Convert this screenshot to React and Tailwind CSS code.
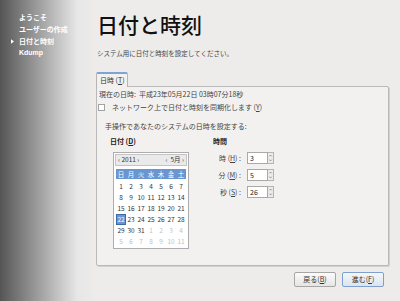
import React from "react";

const weekdays = ["日", "月", "火", "水", "木", "金", "土"];
const weeks = [
  [1, 2, 3, 4, 5, 6, 7],
  [8, 9, 10, 11, 12, 13, 14],
  [15, 16, 17, 18, 19, 20, 21],
  [22, 23, 24, 25, 26, 27, 28],
  [29, 30, 31, 1, 2, 3, 4],
  [5, 6, 7, 8, 9, 10, 11],
];

function Key({ k }) {
  return (
    <span>
      (<span className="underline">{k}</span>)
    </span>
  );
}

function Spin({ label, k, value }) {
  return (
    <div className="flex items-center h-[12px]">
      <div className="w-[28px] text-right whitespace-nowrap text-[#444]">
        {label} <Key k={k} /> :
      </div>
      <div className="ml-[6px] w-[21px] h-[12px] bg-white border border-[#a9a9a9] pl-[2px] leading-[10px] text-[#222]">
        {value}
      </div>
      <div className="w-[6px] h-[12px] flex flex-col border border-l-0 border-[#b4b4b4] bg-[#ecebea]">
        <svg viewBox="0 0 6 5" className="w-[5px] h-[5px]">
          <path d="M1.5 3.5 L3 2 L4.5 3.5" fill="none" stroke="#666" strokeWidth="0.8" />
        </svg>
        <svg viewBox="0 0 6 5" className="w-[5px] h-[5px]">
          <path d="M1.5 1.5 L3 3 L4.5 1.5" fill="none" stroke="#666" strokeWidth="0.8" />
        </svg>
      </div>
    </div>
  );
}

export default function App() {
  return (
    <div className="w-[400px] h-[301px] flex overflow-hidden bg-[#edeceb] font-['Noto_Sans_CJK_JP','Noto_Sans',sans-serif]">
      {/* sidebar */}
      <aside className="w-[94px] shrink-0 bg-[linear-gradient(to_right,#555555,#e7e7e7_82%,#ecebea)] pt-[11px] text-white text-[7px] font-bold leading-[12px]">
        <div className="flex items-center pl-[11px]">
          <span className="w-[8px]" />
          ようこそ
        </div>
        <div className="flex items-center pl-[11px]">
          <span className="w-[8px]" />
          ユーザーの作成
        </div>
        <div className="flex items-center pl-[11px]">
          <span className="w-[8px] flex items-center">
            <svg viewBox="0 0 4 6" className="w-[3px] h-[5px]">
              <path d="M0 0 L4 3 L0 6 Z" fill="#fff" />
            </svg>
          </span>
          日付と時刻
        </div>
        <div className="flex items-center pl-[11px] font-['Liberation_Sans',sans-serif]">
          <span className="w-[8px]" />
          Kdump
        </div>
      </aside>

      {/* main */}
      <main className="flex-1 pl-[2px] flex flex-col text-[7px] text-[#333]">
        <h1 className="mt-[12px] pl-[1px] h-[24px] leading-[24px] text-[21px] font-medium text-[#111]">
          日付と時刻
        </h1>
        <p className="mt-[12px] pl-[1px] h-[10px] leading-[10px] text-[6.5px] text-[#444]">
          システム用に日付と時刻を設定してください。
        </p>

        {/* tab */}
        <div className="mt-[14px] w-[32px] h-[15px] -mb-px relative z-10 bg-[#f2f1f0] border border-b-0 border-[#b5b5b5] border-t-2 border-t-[#7fa3d3] rounded-t-[2px] pl-[3px] leading-[12px] text-[#333]">
          日時 <Key k="T" />
        </div>

        {/* panel */}
        <section className="w-[293px] h-[180px] bg-[#f2f1f0] border border-[#b9b9b9] rounded-[2px] shadow-[1px_1px_0_#d2d1d0] flex flex-col">
          <div className="mt-[2px] ml-[2px] h-[10px] leading-[10px] text-[#444]">
            現在の日時:&nbsp; 平成23年05月22日 03時07分18秒
          </div>
          <div className="mt-[3px] ml-[1px] h-[10px] flex items-center text-[#444]">
            <span className="w-[7px] h-[7px] bg-white border border-[#a3a3a3]" />
            <span className="ml-[7px] leading-[10px]">
              ネットワーク上で日付と時刻を同期化します <Key k="Y" />
            </span>
          </div>
          <div className="mt-[9px] ml-[8px] h-[10px] leading-[10px] text-[#444]">
            手操作であなたのシステムの日時を設定する:
          </div>

          <div className="mt-[5px] flex">
            {/* date */}
            <div className="ml-[13px] w-[80px]">
              <div className="h-[10px] leading-[10px] font-bold text-[#222]">
                日付 <Key k="D" />
              </div>
              <div className="mt-[6px] ml-[3px] w-[76px] h-[97px] bg-white border border-[#adadad] flex flex-col">
                <div className="h-[12px] mx-[1px] mt-[1px] bg-[#ebeaea] border border-[#c4c4c4] flex items-center justify-between px-[2px] text-[6.5px] text-[#333]">
                  <span>‹ 2011 ›</span>
                  <span>‹&nbsp; 5月 ›</span>
                </div>
                <div className="mt-[3px] mx-[2px] h-[10px] bg-[#6b95d0] grid grid-cols-7 text-white text-[6.5px] leading-[10px] text-center">
                  {weekdays.map((w) => (
                    <span key={w}>{w}</span>
                  ))}
                </div>
                <div className="mt-[2px] mx-[2px] flex flex-col text-[6.5px]">
                  {weeks.map((row, ri) => (
                    <div key={ri} className="grid grid-cols-7 h-[11px] leading-[11px] text-center">
                      {row.map((d, di) => {
                        const other = ri >= 4 && (ri === 5 || di >= 3);
                        const sel = ri === 3 && di === 0;
                        return (
                          <span
                            key={di}
                            className={
                              sel
                                ? "bg-[#6b95d0] text-white border border-[#3e6aa8] leading-[9px]"
                                : other
                                ? "text-[#c2c2c2]"
                                : "text-[#333]"
                            }
                          >
                            {d}
                          </span>
                        );
                      })}
                    </div>
                  ))}
                </div>
              </div>
            </div>

            {/* time */}
            <div className="ml-[23px] flex flex-col">
              <div className="h-[10px] leading-[10px] font-bold text-[#222]">時間</div>
              <div className="mt-[6px] flex flex-col gap-[5px]">
                <Spin label="時" k="H" value="3" />
                <Spin label="分" k="M" value="5" />
                <Spin label="秒" k="S" value="26" />
              </div>
            </div>
          </div>
        </section>

        {/* buttons */}
        <div className="mt-[6px] w-[292px] flex justify-end gap-[6px] pr-[4px]">
          <button className="w-[42px] h-[15px] rounded-[2px] border border-[#a6a6a6] bg-[linear-gradient(#fbfbfb,#e6e5e4)] text-[7px] leading-[13px] text-[#333]">
            戻る(<span className="underline">B</span>)
          </button>
          <button className="w-[42px] h-[15px] rounded-[2px] border border-[#7f9fcc] bg-[linear-gradient(#f4f7fb,#dbe4f0)] text-[7px] leading-[13px] text-[#333]">
            進む(<span className="underline">F</span>)
          </button>
        </div>
      </main>
    </div>
  );
}
